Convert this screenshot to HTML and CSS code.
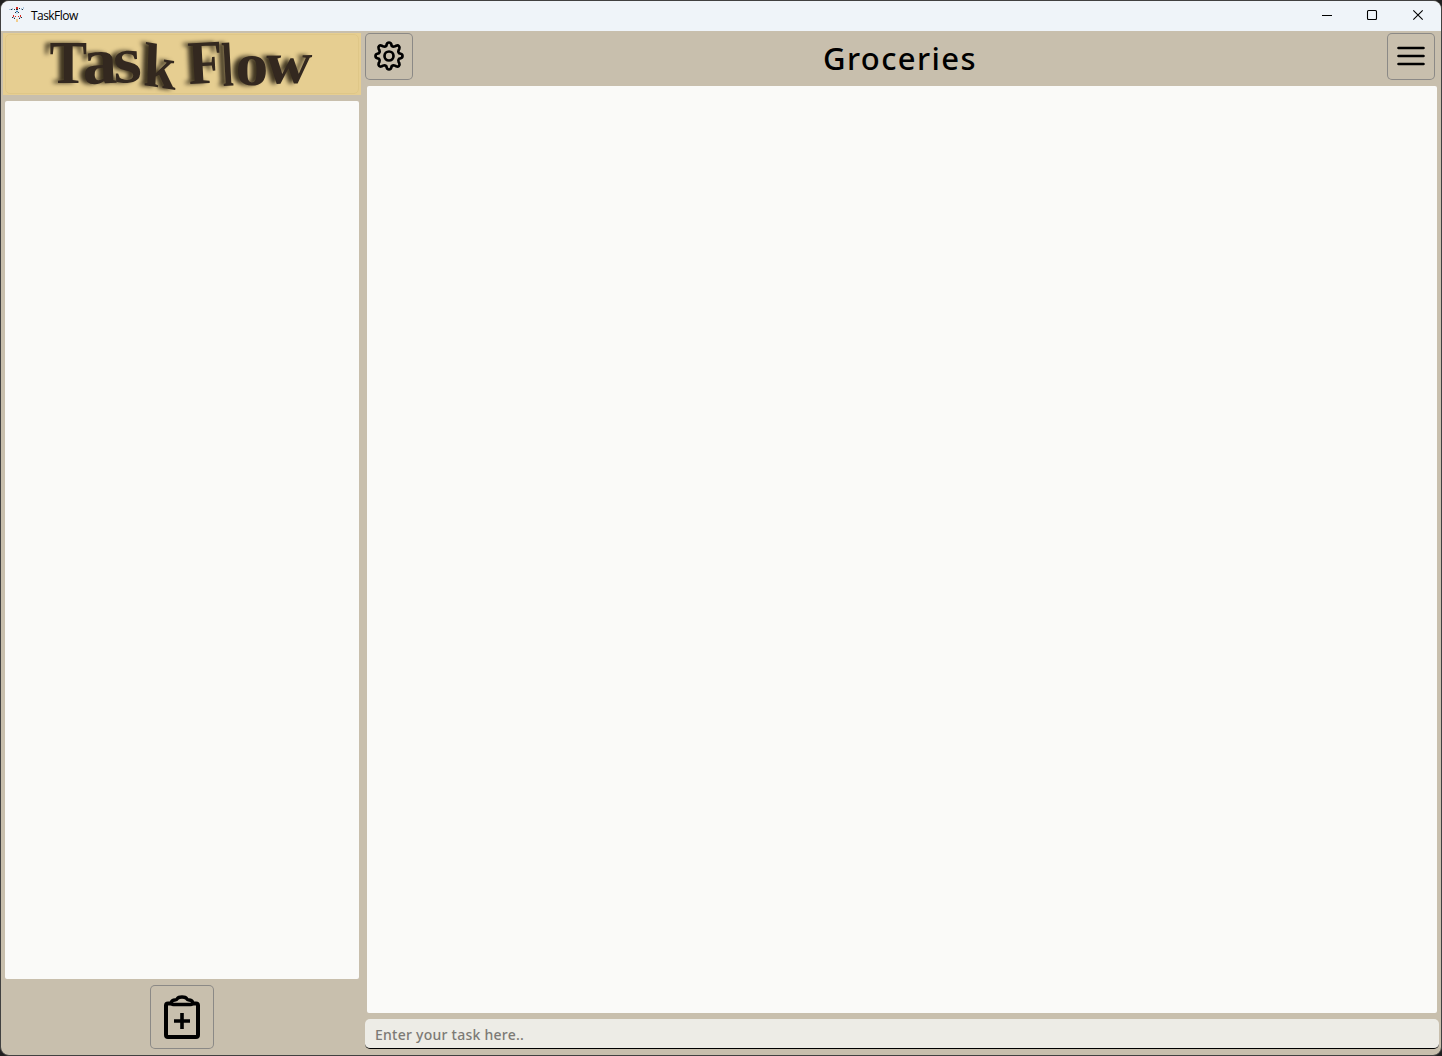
FILE: index.html
```html
<!DOCTYPE html>
<html lang="en">
<head>
<meta charset="utf-8">
<title>TaskFlow</title>
<link rel="stylesheet" href="styles.css">
</head>
<body>
<div class="window">
  <header class="titlebar">
    <svg class="app-icon" width="16" height="16" viewBox="0 0 16 16">
      <path d="M0 3h2v1H0zM3 2h1v2H3zM12 2h1v2h-1zM14 1h1v2h-1zM4 11h2v1H4zM10 11h2v1h-2z" fill="#a9c7dd"/>
      <path d="M2 3h1v1H2zM5 3h1v1H5zM10 2h1v1h-1zM13 3h1v1h-1zM7 3h2v1H7zM6 6h1v1H6zM9 6h1v1H9zM3 11h1v1H3zM12 11h1v1h-1zM5 12h1v1H5zM10 12h1v1h-1z" fill="#26323c"/>
      <path d="M7 1h2v2H7zM4 9h1v2H4zM11 9h1v2h-1zM6 10h1v1H6zM9 10h1v1H9z" fill="#d9281e"/>
      <path d="M7 4h2v4H7z" fill="#c9e3f1"/><path d="M7 5h2v1H7z" fill="#347cb5"/>
      <path d="M7 13h2v3H7z" fill="#f2ce8e"/>
    </svg>
    <span class="app-name">TaskFlow</span>
    <div class="controls">
      <svg width="46" height="30" viewBox="0 0 46 30"><path d="M18 14.500h10"/></svg>
      <svg width="45" height="30" viewBox="0 0 45 30"><rect x="17.500" y="9.500" width="9" height="9" rx="1"/></svg>
      <svg width="46" height="30" viewBox="0 0 46 30"><path d="M18.300 9.300l9.400 9.400M27.700 9.300l-9.400 9.400"/></svg>
    </div>
  </header>
  <main class="content">
    <aside class="sidebar">
      <div class="brand">
        <svg width="358" height="62" viewBox="3 33 358 62" aria-label="Task Flow">
          <defs>
            <g id="wordmark">
              <text transform="translate(49.500 83) scale(.91 1)">T</text>
              <text transform="translate(83 84) rotate(-2) scale(1.120 1.080)">a</text>
              <text transform="translate(114 83) rotate(-3) scale(1.180 1.080)">s</text>
              <text transform="translate(143 85) rotate(9) skewX(7) scale(.95 1)">k</text>
              <text transform="translate(189 84) rotate(-3) scale(.92 1)">F</text>
              <text transform="translate(223 86) rotate(-3) scale(.65 1)">l</text>
              <text transform="translate(235.500 84.500) scale(1.060 1)">o</text>
              <text transform="translate(264 83.500) rotate(-1) skewX(-6) scale(1.030 .97)">w</text>
            </g>
          </defs>
          <use href="#wordmark" class="wordmark-shadow" x="-5" y="0"/>
          <use href="#wordmark" class="wordmark"/>
        </svg>
      </div>
      <div class="panel"></div>
      <button class="btn btn-add" aria-label="Add list">
        <svg width="64" height="64" viewBox="150 985 64 64" fill="none" stroke="#000" stroke-linejoin="round">
          <path d="M171 1003.500h-3q-2 0-2 2v29.500q0 2 2 2h28q2 0 2-2v-29.500q0-2-2-2H193" stroke-width="4"/>
          <path d="M173.500 1004.500q-2.500 0-2-2.300.5-2.200 3.500-2.200 1.700 0 2.500-1.500 1-1.500 4.500-1.500t4.500 1.500q.8 1.500 2.500 1.500 3 0 3.500 2.200.5 2.300-2 2.300z" stroke-width="3.500"/>
          <path d="M182 1013v16M174 1021h16" stroke-width="3.600"/>
        </svg>
      </button>
    </aside>
    <section class="tasks">
      <div class="toolbar">
        <button class="btn" aria-label="Settings">
          <svg width="48" height="47" viewBox="365 33 48 47" fill="none" stroke="#000" stroke-width="2.700" stroke-linejoin="round">
            <path d="M386.800 44.200Q387.200 42.500 389 42.500T391.200 44.200L391.800 46Q393.200 47.200 394.900 46.400L396.200 45.700Q397.900 45 398.900 46.100T399.300 48.800L398.600 50.100Q397.800 51.800 399 53.200L400.800 53.800Q402.500 54.200 402.500 56T400.800 58.200L399 58.800Q397.800 60.200 398.600 61.900L399.300 63.200Q400 64.900 398.900 65.900T396.200 66.300L394.900 65.600Q393.200 64.800 391.800 66L391.200 67.800Q390.800 69.500 389 69.500T386.800 67.800L386.200 66Q384.800 64.800 383.100 65.600L381.800 66.300Q380.100 67 379.100 65.900T378.700 63.200L379.400 61.900Q380.200 60.200 379 58.800L377.200 58.200Q375.500 57.800 375.500 56T377.200 53.800L379 53.200Q380.200 51.800 379.400 50.100L378.700 48.800Q378 47.100 379.100 46.100T381.800 45.700L383.100 46.400Q384.800 47.200 386.200 46Z"/>
            <circle cx="389" cy="56" r="4.500"/>
          </svg>
        </button>
        <h1 class="list-title">Groceries</h1>
        <button class="btn" aria-label="Menu">
          <svg width="48" height="47" viewBox="1387 33 48 47" fill="none" stroke="#000" stroke-width="2.600" stroke-linecap="round"><path d="M1398.500 48h25M1398.500 56h25M1398.500 64h25"/></svg>
        </button>
      </div>
      <div class="panel"></div>
      <input class="task-input" type="text" placeholder="Enter your task here..">
    </section>
  </main>
</div>
</body>
</html>
```
FILE: styles.css
```css
* { box-sizing: border-box; }
body { margin: 0; background: #202020; }
.window {
  width: 1442px; height: 1056px; border: 1px solid #414141; border-radius: 9px;
  overflow: hidden; display: flex; flex-direction: column; background: #c8bfad;
}
.titlebar { height: 30px; flex: none; display: flex; align-items: center; padding-left: 8px; background: #eff4f9; }
.app-icon { margin-bottom: 4px; }
.app-name { margin: 0 0 2px 6px; font: 12px "Open Sans", sans-serif; letter-spacing: -.55px; color: #000; }
.controls { margin-left: auto; display: flex; }
.controls svg { display: block; fill: none; stroke: #000; stroke-width: 1.1; }
.content { flex: 1; min-height: 0; display: flex; gap: 4px; padding: 2px 2px 6px; }
.sidebar { width: 358px; display: flex; flex-direction: column; align-items: center; }
.brand { height: 62px; flex: none; background: #e6ce91; position: relative; }
.brand::after { content: ""; position: absolute; inset: 1px 2px; border: 1px solid #dfc788; border-radius: 5px; }
.brand svg { display: block; font: bold 62px "Liberation Serif", serif; }
.wordmark { fill: #33281f; }
.wordmark-shadow { fill: #3d331f; filter: blur(2px); }
.panel { flex: 1; background: #fafaf8; border-radius: 2px; }
.sidebar .panel { width: 354px; margin: 6px 0; }
.btn { width: 48px; height: 47px; flex: none; padding: 0; border: 0; border-radius: 5px; background: none; box-shadow: inset 0 0 0 1px #8b8986; }
.btn svg { display: block; }
.btn-add { width: 64px; height: 64px; }
.tasks { width: 1074px; display: flex; flex-direction: column; }
.toolbar { display: flex; height: 53px; padding-right: 4px; }
.list-title { flex: 1; margin: 0; text-align: center; font: 500 31px/51px "Noto Sans", sans-serif; letter-spacing: 1.4px; color: #000; }
.tasks .panel { margin: 0 2px 6px; }
.task-input {
  height: 30px; flex: none; padding: 1px 10px 0; border: 0; border-bottom: 1px solid #000; border-radius: 5px;
  background: #edece6; font: 500 14px "Noto Sans", sans-serif; letter-spacing: .25px;
}
.task-input::placeholder { color: #7c7a75; opacity: 1; }
```
